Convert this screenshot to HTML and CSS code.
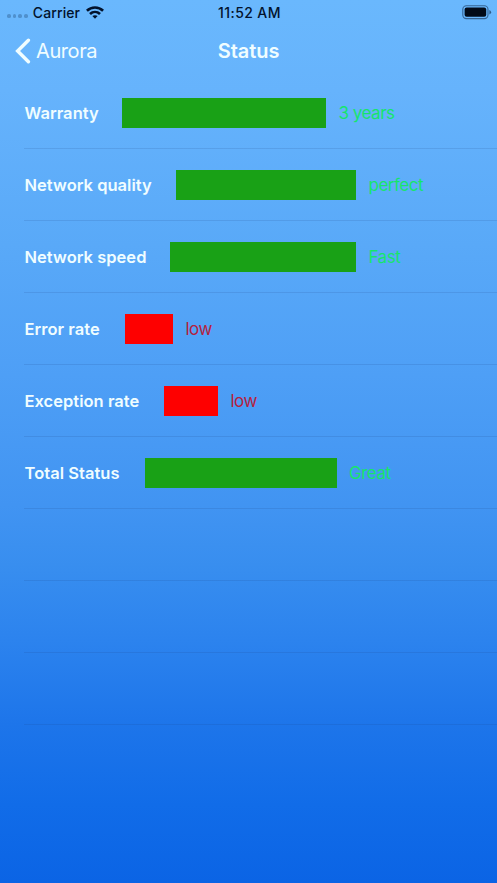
FILE: index.html
```
<!DOCTYPE html>
<html lang="en">
<head>
<meta charset="utf-8">
<title>Status</title>
<link rel="stylesheet" href="styles.css">
</head>
<body>
<div class="screen">
  <header class="statusbar">
    <div class="carrier">
      <span class="dots"><i></i><i></i><i></i><i></i></span>
      <span class="carrier-name">Carrier</span>
      <svg class="wifi" width="18" height="13" viewBox="0 0 18 13" fill="none" stroke="#02122c" stroke-width="2.7">
        <path d="M.9 4.8C5.5.4 12.5.4 17.1 4.8"/>
        <path d="M4 8C6.9 5.3 11.1 5.3 14 8"/>
        <path d="M6.4 10.1C7.9 8.8 10.1 8.8 11.6 10.1L9 12.8Z" fill="#02122c" stroke="none"/>
      </svg>
    </div>
    <time class="clock">11:52 AM</time>
    <svg class="battery" width="30" height="15" viewBox="0 0 30 15">
      <rect x=".8" y=".8" width="25.2" height="12.8" rx="3.6" fill="none" stroke="#02122c" stroke-opacity=".5" stroke-width="1.1"/>
      <rect x="2.6" y="2.6" width="21.6" height="9.2" rx="2" fill="#020a18"/>
      <path d="M27.4 5v4.4q1.7-.7 1.7-2.2t-1.7-2.2z" fill="#02122c" fill-opacity=".55"/>
    </svg>
  </header>
  <nav class="navbar">
    <a class="back">
      <svg width="16" height="26" viewBox="0 0 16 26" fill="none" stroke="#f0fdff" stroke-width="3.4" stroke-linecap="round"><path d="M13.4 2.2 2.6 13l10.8 10.8"/></svg>
      <span>Aurora</span>
    </a>
    <h1 class="title">Status</h1>
  </nav>
  <main class="list">
    <div class="row"><span class="label" style="width:73.5px">Warranty</span><span class="bar" style="width:204px"></span><span class="value">3 years</span></div>
    <div class="row"><span class="label" style="width:127.5px">Network quality</span><span class="bar" style="width:180px"></span><span class="value">perfect</span></div>
    <div class="row"><span class="label" style="width:121.5px">Network speed</span><span class="bar" style="width:186px"></span><span class="value">Fast</span></div>
    <div class="row low"><span class="label" style="width:76.5px">Error rate</span><span class="bar" style="width:48px"></span><span class="value">low</span></div>
    <div class="row low"><span class="label" style="width:115.5px">Exception rate</span><span class="bar" style="width:54px"></span><span class="value">low</span></div>
    <div class="row"><span class="label" style="width:96px">Total Status</span><span class="bar" style="width:192px"></span><span class="value">Great</span></div>
    <div class="row"></div>
    <div class="row"></div>
    <div class="row"></div>
  </main>
</div>
</body>
</html>
```
FILE: styles.css
```
* { box-sizing: border-box; }
body {
  margin: 0;
  font-family: Inter, "Liberation Sans", sans-serif;
}
.screen {
  height: 883px;
  overflow: hidden;
  background: linear-gradient(#6ab8fd 0, #66b3fc 90px, #59a9f8 245px, #4e9ff6 375px, #4194f2 505px, #388eef 565px, #2c83ee 640px, #1d75ea 725px, #116ce8 805px, #0b64e5 883px);
}
.statusbar {
  height: 24px;
  display: grid;
  grid-template-columns: 1fr auto 1fr;
  align-items: center;
  padding: 0 5px 0 7px;
  color: #02122c;
  font-size: 14px;
  font-weight: 500;
}
.carrier { display: flex; align-items: center; }
.dots {
  display: flex;
  gap: 2px;
  margin: 8px 5px 0 0;
}
.dots i {
  width: 3.7px;
  height: 3.7px;
  border-radius: 50%;
  background: #4f90cd;
}
.carrier-name { letter-spacing: .12px; }
.wifi { margin-left: 6px; }
.clock { letter-spacing: .4px; }
.battery { justify-self: end; }
.navbar {
  height: 53px;
  display: grid;
  grid-template-columns: 1fr auto 1fr;
  align-items: center;
  padding: 0 15px;
  color: #f0fdff;
}
.back {
  display: flex;
  align-items: center;
  gap: 5px;
  font-size: 20px;
  letter-spacing: -.4px;
}
.title {
  margin: 0;
  font-size: 20px;
  font-weight: 600;
  letter-spacing: -.05px;
}
.list { padding-left: 24px; }
.row {
  height: 72px;
  display: flex;
  align-items: center;
  padding-left: .5px;
  border-bottom: 1px solid rgba(25, 65, 125, .14);
}
.label {
  flex: none;
  margin-right: 24px;
  color: #f0fdff;
  font-size: 16.5px;
  font-weight: 600;
  letter-spacing: .03px;
  white-space: nowrap;
}
.bar {
  flex: none;
  height: 30px;
  background: #19a116;
}
.value {
  margin-left: 12.5px;
  color: #17e46c;
  font-size: 17px;
  letter-spacing: -.5px;
}
.low .bar { background: #fe0000; }
.low .value { color: #b5213e; }
```
